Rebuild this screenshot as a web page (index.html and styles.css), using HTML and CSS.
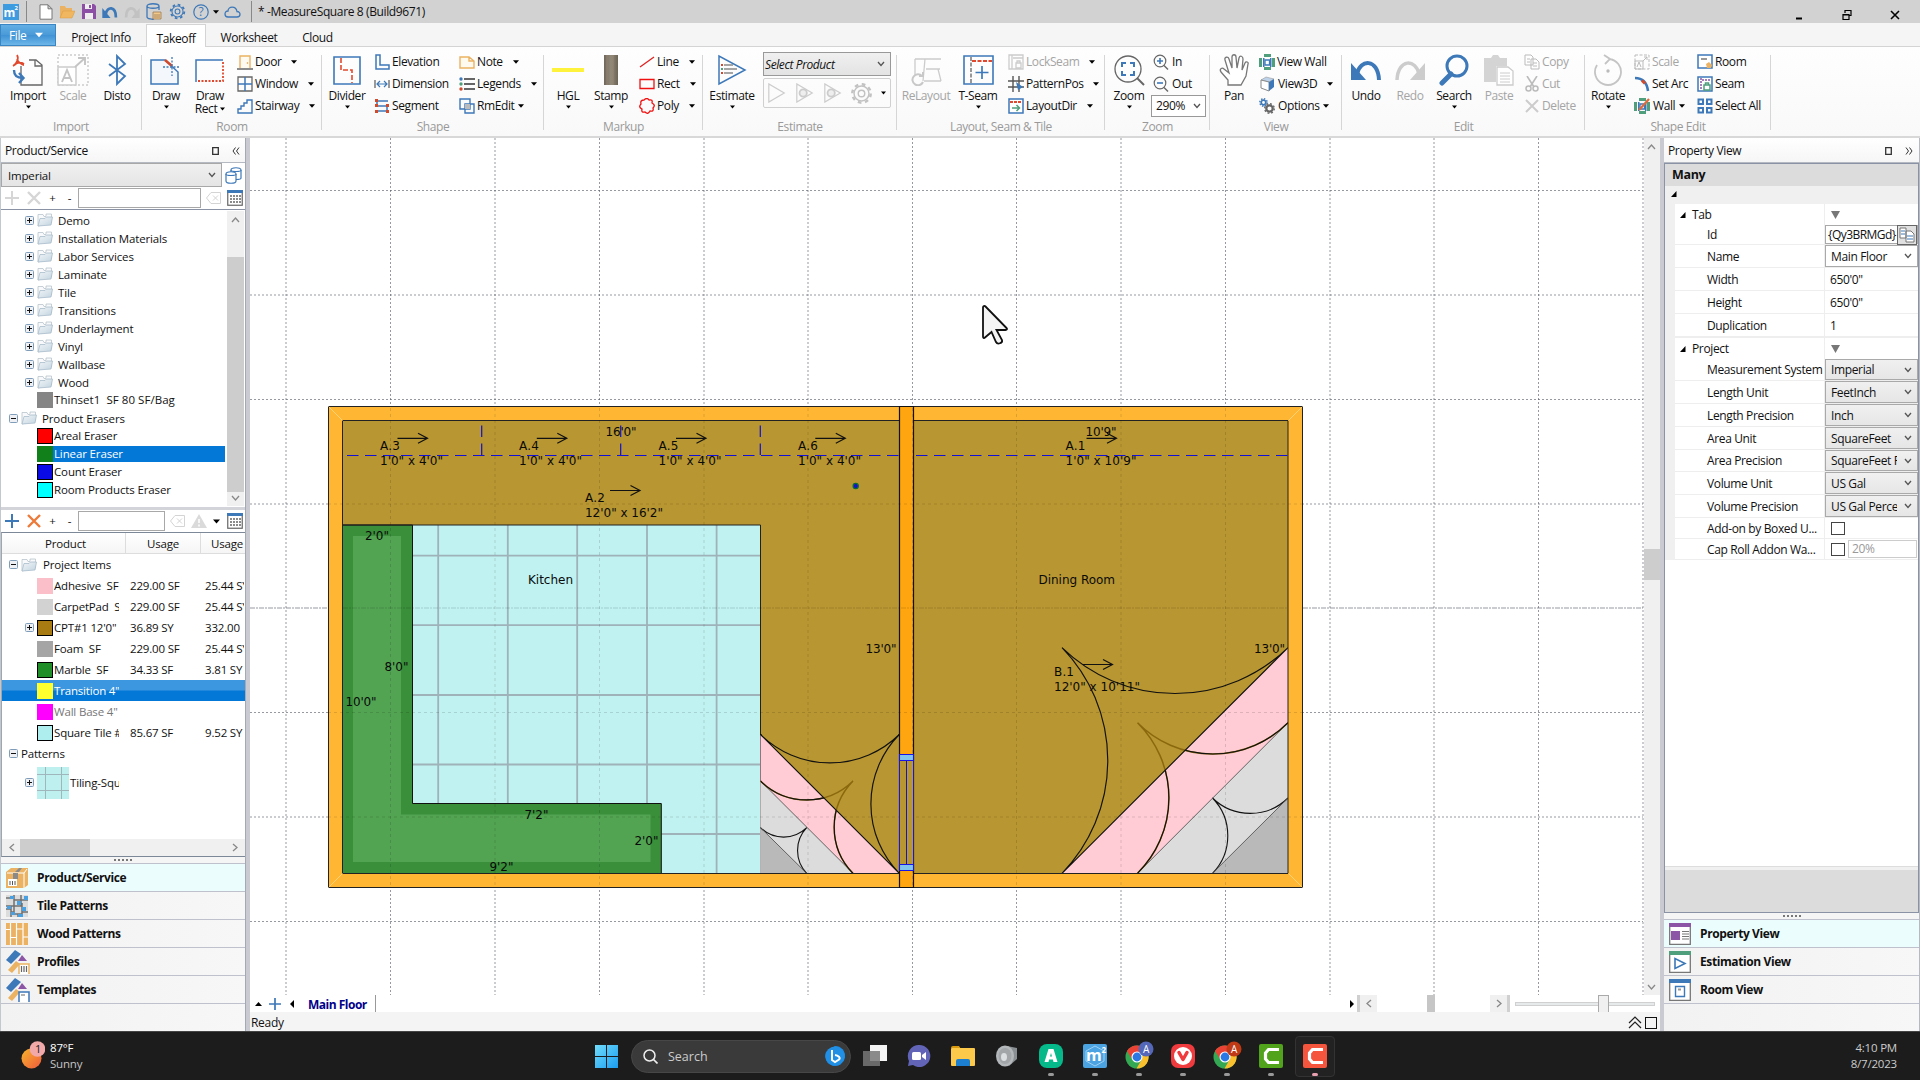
FILE: index.html
```html
<!DOCTYPE html>
<html lang="en">
<head>
<meta charset="utf-8">
<title>MeasureSquare 8</title>
<link rel="stylesheet" href="styles.css">
</head>
<body>
<svg class="defs" width="0" height="0">
  <defs>
    <linearGradient id="gFolder" x1="0" y1="0" x2="1" y2="1"><stop offset="0" stop-color="#f2f6f8"/><stop offset="1" stop-color="#c3d4e0"/></linearGradient>
    <linearGradient id="gWin" x1="0" y1="0" x2="1" y2="1"><stop offset="0" stop-color="#70dcfb"/><stop offset="1" stop-color="#1a9cf0"/></linearGradient>
    <linearGradient id="gSun" x1="0" y1="0" x2="1" y2="1"><stop offset="0" stop-color="#f7b52c"/><stop offset="1" stop-color="#f05a3c"/></linearGradient>
    <linearGradient id="gStamp" x1="0" y1="0" x2="1" y2="0"><stop offset="0" stop-color="#6f675a"/><stop offset=".5" stop-color="#948a7a"/><stop offset="1" stop-color="#6b6355"/></linearGradient>
    <symbol id="arrow" viewBox="0 0 7 4"><path d="M0 0h7L3.500 4z"/></symbol>
    <symbol id="chev" viewBox="0 0 8 6"><path d="M1 1l3 3.500L7 1" fill="none" stroke="#555" stroke-width="1.300"/></symbol>
    <symbol id="plusbox" viewBox="0 0 9 9"><rect x=".5" y=".5" width="8" height="8" rx="1" fill="#eef0f4" stroke="#7f9db9"/><path d="M2 4.500h5M4.500 2v5" stroke="#111"/></symbol>
    <symbol id="minusbox" viewBox="0 0 9 9"><rect x=".5" y=".5" width="8" height="8" rx="1" fill="#eef0f4" stroke="#7f9db9"/><path d="M2 4.500h5" stroke="#111"/></symbol>
    <symbol id="folder" viewBox="0 0 16 16"><path d="M1 14V2.500h5l1 2h2V2h5.500v9z" fill="#f7f9fa" stroke="#b9c4cc" stroke-width=".8"/><path d="M1 14L3 6.500h5L9.500 5h6L14 13z" fill="url(#gFolder)" stroke="#a9bccb" stroke-width=".8"/></symbol>
    <symbol id="plus" viewBox="0 0 14 14"><path d="M7 0v14M0 7h14" stroke="currentColor" stroke-width="2"/></symbol>
    <symbol id="cross" viewBox="0 0 14 14"><path d="M1 1l12 12M13 1L1 13" stroke="currentColor" stroke-width="2.400"/></symbol>
    <symbol id="clear" viewBox="0 0 15 12"><path d="M5 .5h9.500v11H5L.5 6zM7 3.500l5 5M12 3.500l-5 5" fill="none" stroke="#d4d4d4"/></symbol>
    <symbol id="gridic" viewBox="0 0 16 16"><rect x=".75" y=".75" width="14.500" height="14.500" fill="#fff" stroke="#666" stroke-width="1.200"/><path d="M0 1.500h16" stroke="#3d78b8" stroke-width="3"/><path d="M3 6h2m1 0h2m1 0h2m1 0h2M3 9h2m1 0h2m1 0h2m1 0h2M3 12h2m1 0h2m1 0h2m1 0h2" stroke="#666" stroke-width="1.500"/></symbol>
    <symbol id="undo" viewBox="0 0 26 22"><path d="M6 15C8 2 23 1 23 21" fill="none" stroke="currentColor" stroke-width="4.600"/><path d="M0 5v17h14z" fill="currentColor"/></symbol>
    <symbol id="gear" viewBox="0 0 24 24"><g fill="none" stroke="currentColor"><circle cx="12" cy="12" r="9.600" stroke-width="2.600" stroke-dasharray="3.770 3.770"/><circle cx="12" cy="12" r="7.800" stroke-width="1.500"/><circle cx="12" cy="12" r="3.400" stroke-width="1.500"/></g></symbol>
    <symbol id="mag" viewBox="0 0 16 16"><circle cx="7" cy="7" r="5.800" fill="none" stroke="#666" stroke-width="1.200"/><path d="M11 11.500l4 4" stroke="#666" stroke-width="1.400"/></symbol>
    <symbol id="profile" viewBox="0 0 24 24"><path d="M0 10L9 0l6 4L5 14z" fill="#3d78b8"/><path d="M16 5l5 6h-9z" fill="#8c55a5"/><path d="M2 20L10 11l4 3-8 9z" fill="#eab262"/></symbol>
    <symbol id="chrome" viewBox="0 0 24 24"><circle cx="12" cy="12" r="11.500" fill="#34a853"/><path d="M12 .5A11.500 11.500 0 0 1 22.500 7H12l-5 7L2 6A11.500 11.500 0 0 1 12 .5z" fill="#ea4335"/><path d="M22.500 7A11.500 11.500 0 0 1 11.500 23.500L17 14l-3-7z" fill="#fbc02d"/><circle cx="12" cy="12" r="5.500" fill="#fff"/><circle cx="12" cy="12" r="4.400" fill="#2b78e4"/></symbol>
    <symbol id="play" viewBox="0 0 20 22"><path d="M1 1v20l17-10z" fill="none" stroke="#ccc" stroke-width="1.300"/></symbol>
    <symbol id="wallic" viewBox="0 0 16 16"><path d="M5 0h7v3H5zM5 13h7v3H5zM0 4h3v9H0zM13 4h3v9h-3z" fill="#4f9f7c"/><path d="M4 4h1.500v9H4zM11 4h1.500v9H11z" fill="#3d78b8"/><path d="M6 6h4.500v5H6z" fill="#fff" stroke="#3d78b8" stroke-width="1.300"/></symbol>
  </defs>
</svg>

<header class="titlebar">
  <svg class="logo" width="16" height="16" viewBox="0 0 16 16"><rect width="16" height="16" fill="#3d9be0"/><text x="0.500" y="13" class="logo-m">m</text><text x="11.500" y="6" class="logo-2">2</text></svg>
  <i class="tsep"></i>
  <div class="quick">
    <svg width="14" height="16" viewBox="0 0 14 16"><path d="M1 .8h8l4 4v10.400H1zM9 .8v4h4" fill="#fff" stroke="#777"/></svg>
    <svg width="16" height="14" viewBox="0 0 16 14"><path d="M1 13V1h5l1 2h6v3" fill="#eab262"/><path d="M1 13L4 6h12l-3 7z" fill="#f0b660" stroke="#d99a3c" stroke-width=".5"/></svg>
    <svg width="14" height="15" viewBox="0 0 14 15"><path d="M0 0h12l2 2v13H0z" fill="#8c4fa5"/><path d="M3 0h7v5H3zM3 9h8v6H3z" fill="#eee"/><path d="M7 1h2v3H7z" fill="#8c4fa5"/></svg>
    <svg class="blue" width="16" height="13"><use href="#undo"/></svg>
    <svg class="lt flip" width="16" height="13"><use href="#undo"/></svg>
    <svg width="16" height="17" viewBox="0 0 16 17"><path d="M1 3v11c0 2 6 2.500 7 2M13 3v4M1 3c0-3 12-3 12 0S1 6 1 3z" fill="none" stroke="#3d78b8" stroke-width="1.300"/><path d="M7 9h8v7H7zM9 11v4m2-4v4m2-4v4" fill="#f3c98b" stroke="#9b7b55" stroke-width=".8"/></svg>
    <svg class="blue" width="17" height="17"><use href="#gear"/></svg>
    <svg class="help" width="16" height="16" viewBox="0 0 16 16"><circle cx="8" cy="8" r="7.200" fill="none" stroke="#3d78b8" stroke-width="1.200"/><text x="8" y="12" text-anchor="middle" class="qm">?</text></svg>
    <svg class="qarr" width="6" height="4"><use href="#arrow"/></svg>
    <svg width="17" height="12" viewBox="0 0 17 12"><path d="M4 11h9c4 0 4-5.500 0-5.500C12-.5 4 0 4 5 0 5 0 11 4 11z" fill="none" stroke="#3d78b8" stroke-width="1.300"/></svg>
  </div>
  <i class="tsep"></i>
  <span class="title">* -MeasureSquare 8 (Build9671)</span>
  <div class="winbtns">
    <svg width="10" height="12" viewBox="0 0 10 12"><path d="M2 9.500h6" stroke="#000" stroke-width="2"/></svg>
    <svg width="10" height="12" viewBox="0 0 10 12"><path d="M3 4V1.500h6v5H7M1 5.500h6v5H1zM1 6h6" fill="none" stroke="#000" stroke-width="1.200"/></svg>
    <svg width="10" height="10" viewBox="0 0 10 10"><path d="M1 1l8 8M9 1L1 9" stroke="#000" stroke-width="1.600"/></svg>
  </div>
</header>

<nav class="tabs">
  <div class="file">File <svg width="8" height="6"><use href="#arrow"/></svg></div>
  <div class="tab t1">Project Info</div>
  <div class="tab t2 active">Takeoff</div>
  <div class="tab t3">Worksheet</div>
  <div class="tab t4">Cloud</div>
</nav>

<section class="ribbon">
  <div class="group g-import">
    <div class="tools">
      <div class="big"><svg width="32" height="32" viewBox="0 0 32 32"><path d="M9 12v19h21V11l-6-5H17M23 6v6h7" fill="none" stroke="#666" stroke-width="1.300"/><path d="M1 12C5 10 7 4 5 1M5 5c1 3 5 6 7 6M2 11c4-3 7-3 10-1" fill="none" stroke="#e0492e" stroke-width="1.800"/><path d="M2 16c0 6 3 8 9 8M7 19l4.500 5L7 29" fill="none" stroke="#3d78b8" stroke-width="2.400"/></svg><span>Import</span><svg class="arr" width="5" height="4"><use href="#arrow"/></svg></div>
      <div class="big off"><svg width="32" height="32" viewBox="0 0 32 32"><rect x="1" y="1" width="30" height="30" fill="none" stroke="#ccc" stroke-dasharray="2 2" stroke-width="1.500"/><path d="M1 13h18v18H1z" fill="#fff" stroke="#ccc" stroke-width="1.500"/><path d="M5 28l5-12 5 12M7 24h6M18 13L28 4M21 4h7v7" fill="none" stroke="#c4c4c4" stroke-width="1.900"/></svg><span>Scale</span></div>
      <div class="big"><svg width="32" height="32" viewBox="0 0 32 32"><path d="M8 10l16 12-8 8V2l8 8L8 22" fill="none" stroke="#3d78b8" stroke-width="1.800"/></svg><span>Disto</span></div>
    </div>
    <div class="gname">Import</div>
  </div>
  <div class="group g-room">
    <div class="tools">
      <div class="big"><svg width="32" height="32" viewBox="0 0 32 32"><path d="M1 6h14l13 12v12H1z" fill="#f4f8fc" stroke="#3d78b8" stroke-width="1.500"/><path d="M15 6l7 6" stroke="#d24a2c" stroke-width="2.500"/><path d="M22 3v19M13 13h17" stroke="#3d78b8" stroke-dasharray="2 1.500" stroke-width="1.300"/></svg><span>Draw</span><svg class="arr" width="5" height="4"><use href="#arrow"/></svg></div>
      <div class="big"><svg width="32" height="32" viewBox="0 0 32 32"><path d="M2 28V6h27" fill="none" stroke="#3d78b8" stroke-width="1.500"/><path d="M29 8v19H3" fill="none" stroke="#e0492e" stroke-width="1.800" stroke-dasharray="2 1.500"/></svg><span>Draw</span><span class="second">Rect <svg width="5" height="4"><use href="#arrow"/></svg></span></div>
      <div class="col">
        <div class="small"><svg width="16" height="16" viewBox="0 0 16 16"><path d="M3 14V2h10v12" fill="#fffaf2" stroke="#eab262" stroke-width="1.400"/><path d="M0 15h16" stroke="#666" stroke-width="1.500"/><circle cx="10.500" cy="9" r=".8" fill="#d99a3c"/></svg>Door<svg class="sarr" width="6" height="4"><use href="#arrow"/></svg></div>
        <div class="small"><svg width="16" height="16" viewBox="0 0 16 16"><path d="M1 1h14v14H1z" fill="none" stroke="#666" stroke-width="1.300"/><path d="M8 1v14M1 8h14" stroke="#3d78b8" stroke-width="1.500"/></svg>Window<svg class="sarr" width="6" height="4"><use href="#arrow"/></svg></div>
        <div class="small"><svg width="16" height="16" viewBox="0 0 16 16"><path d="M1 15v-4h3V8h3V5h3V2h5v13z" fill="none" stroke="#3d78b8" stroke-width="1.400"/></svg>Stairway<svg class="sarr" width="6" height="4"><use href="#arrow"/></svg></div>
      </div>
    </div>
    <div class="gname">Room</div>
  </div>
  <div class="group g-shape">
    <div class="tools">
      <div class="big"><svg width="32" height="32" viewBox="0 0 32 32"><path d="M3 3h26v27H3z" fill="none" stroke="#3d78b8" stroke-width="1.600"/><path d="M10 4v12h11v13" fill="none" stroke="#e0492e" stroke-width="1.600" stroke-dasharray="5 2"/></svg><span>Divider</span><svg class="arr" width="5" height="4"><use href="#arrow"/></svg></div>
      <div class="col">
        <div class="small"><svg width="16" height="16" viewBox="0 0 16 16"><path d="M2 1h4v10h9v4H2z" fill="none" stroke="#3d78b8" stroke-width="1.500"/></svg>Elevation</div>
        <div class="small"><svg width="16" height="16" viewBox="0 0 16 16"><path d="M1 4v8M15 4v8" stroke="#666" stroke-width="1.300"/><path d="M3 8h10M6 5L3 8l3 3M10 5l3 3-3 3" fill="none" stroke="#3d78b8" stroke-width="1.200"/></svg>Dimension</div>
        <div class="small"><svg width="16" height="16" viewBox="0 0 16 16"><path d="M14 3H3v5h10v5H2" fill="none" stroke="#3d78b8" stroke-width="1.500"/><path d="M1 1h3v3H1zM1 6h3v3H1zM12 6h3v3h-3zM1 12h3v3H1zM12 12h3v3h-3z" fill="#d24a2c"/></svg>Segment</div>
      </div>
      <div class="col">
        <div class="small"><svg width="16" height="16" viewBox="0 0 16 16"><path d="M1 3h9l5 4v7H1zM10 3v4h5" fill="#fffaf0" stroke="#eab262" stroke-width="1.400"/></svg>Note<svg class="sarr" width="6" height="4"><use href="#arrow"/></svg></div>
        <div class="small"><svg width="16" height="16" viewBox="0 0 16 16"><path d="M5 3h11M5 8h11M5 13h11" stroke="#666" stroke-width="2"/><circle cx="2" cy="3" r="1.700" fill="#3d78b8"/><circle cx="2" cy="8" r="1.700" fill="#4f9f7c"/><circle cx="2" cy="13" r="1.700" fill="#d24a2c"/></svg>Legends<svg class="sarr" width="6" height="4"><use href="#arrow"/></svg></div>
        <div class="small"><svg width="16" height="16" viewBox="0 0 16 16"><path d="M1 1h10v10H1zM6 6h9v9H6z" fill="none" stroke="#3d78b8" stroke-width="1.400"/><path d="M6 6h5v5H6z" fill="#bbb"/></svg>RmEdit<svg class="sarr near" width="6" height="4"><use href="#arrow"/></svg></div>
      </div>
    </div>
    <div class="gname">Shape</div>
  </div>
  <div class="group g-markup">
    <div class="tools">
      <div class="big"><svg width="32" height="32" viewBox="0 0 32 32"><path d="M0 16h32" stroke="#fff23c" stroke-width="4"/></svg><span>HGL</span><svg class="arr" width="5" height="4"><use href="#arrow"/></svg></div>
      <div class="big"><svg width="32" height="32" viewBox="0 0 32 32"><rect x="9" y="1" width="14" height="30" fill="url(#gStamp)"/><path d="M12 1v30M18 1v30" stroke="#a2937d" stroke-width=".5"/></svg><span>Stamp</span><svg class="arr" width="5" height="4"><use href="#arrow"/></svg></div>
      <div class="col">
        <div class="small"><svg width="16" height="16" viewBox="0 0 16 16"><path d="M1 13L15 3" stroke="#e02020" stroke-width="1.300"/></svg>Line<svg class="sarr" width="6" height="4"><use href="#arrow"/></svg></div>
        <div class="small"><svg width="16" height="16" viewBox="0 0 16 16"><path d="M1 3.500h14v9H1z" fill="none" stroke="#f01010" stroke-width="1.300"/></svg>Rect<svg class="sarr" width="6" height="4"><use href="#arrow"/></svg></div>
        <div class="small"><svg width="16" height="16" viewBox="0 0 16 16"><path d="M5 2q3-3 5 0 4-1 3 3 4 2 1 5 1 4-3 3-2 4-5 1-4 1-3-3-4-2-1-5-1-4 3-4z" fill="none" stroke="#f01010" stroke-width="1.300"/></svg>Poly<svg class="sarr" width="6" height="4"><use href="#arrow"/></svg></div>
      </div>
    </div>
    <div class="gname">Markup</div>
  </div>
  <div class="group g-estimate">
    <div class="tools">
      <div class="big"><svg width="32" height="32" viewBox="0 0 32 32"><path d="M3 2v28l26-14z" fill="none" stroke="#3d78b8" stroke-width="1.500"/><path d="M8 11h9M8 15h13M8 19h9" stroke="#888" stroke-width="1.300"/><path d="M5 11h2M5 19h2" stroke="#d24a2c" stroke-width="2"/><path d="M5 15h2" stroke="#4f9f7c" stroke-width="2"/></svg><span>Estimate</span><svg class="arr" width="5" height="4"><use href="#arrow"/></svg></div>
      <div class="estbox">
        <div class="selprod"><em>Select Product</em><svg width="8" height="6"><use href="#chev"/></svg></div>
        <div class="playbar">
          <svg width="20" height="20"><use href="#play"/></svg>
          <svg width="20" height="20" viewBox="0 0 20 22"><use href="#play"/><circle cx="8" cy="11" r="4" fill="#eee" stroke="#ccc" stroke-width="2"/></svg>
          <svg width="20" height="20" viewBox="0 0 20 22"><use href="#play"/><circle cx="8" cy="11" r="4" fill="#eee" stroke="#ccc" stroke-width="2"/></svg>
          <svg class="lt" width="23" height="23"><use href="#gear"/></svg>
          <svg width="5" height="4"><use href="#arrow"/></svg>
        </div>
      </div>
    </div>
    <div class="gname">Estimate</div>
  </div>
  <div class="group g-layout">
    <div class="tools">
      <div class="big off"><svg width="32" height="32" viewBox="0 0 32 32"><path d="M5 5h26M5 5v16M15 5l-2 22M16 15h14M28 15l3 12M14 27h17" fill="none" stroke="#ccc" stroke-width="1.300"/><path d="M12 22a5.500 5.500 0 1 0 1 6M9 22h4v-4" fill="none" stroke="#c8c8c8" stroke-width="2"/></svg><span>ReLayout</span></div>
      <div class="big"><svg width="32" height="32" viewBox="0 0 32 32"><path d="M2 2h29v28H2z" fill="none" stroke="#3d78b8" stroke-width="1.600"/><path d="M9 3v27" stroke="#777" stroke-dasharray="4 1.500" stroke-width="1.500"/><path d="M10 7h20" stroke="#e0492e" stroke-dasharray="4 1.500" stroke-width="2"/><path d="M20 12v13M13.500 18.500h13" stroke="#3d78b8" stroke-width="1.700"/></svg><span>T-Seam</span><svg class="arr" width="5" height="4"><use href="#arrow"/></svg></div>
      <div class="col">
        <div class="small off"><svg width="16" height="16" viewBox="0 0 16 16"><path d="M1 1h14v14H1zM4 1v14M5 4h10M8 9h5v5H8zM9 9V7h3v2" fill="none" stroke="#ccc" stroke-width="1.300"/></svg>LockSeam<svg class="sarr" width="6" height="4"><use href="#arrow"/></svg></div>
        <div class="small"><svg width="16" height="16" viewBox="0 0 16 16"><path d="M5 0v16M11 0v16M0 5h16M0 11h16" stroke="#555" stroke-width="1.400"/><path d="M8 6l7 5-5 3z" fill="#3d78b8"/></svg>PatternPos<svg class="sarr mid" width="6" height="4"><use href="#arrow"/></svg></div>
        <div class="small"><svg width="16" height="16" viewBox="0 0 16 16"><path d="M1 1h14v14H1z" fill="#fff" stroke="#3d78b8" stroke-width="1.500"/><path d="M2 4h12" stroke="#e0492e" stroke-width="2" stroke-dasharray="3 1"/><path d="M4 10h7M8.500 7l3 3-3 3" fill="none" stroke="#4f9f7c" stroke-width="1.500"/></svg>LayoutDir<svg class="sarr" width="6" height="4"><use href="#arrow"/></svg></div>
      </div>
    </div>
    <div class="gname">Layout, Seam &amp; Tile</div>
  </div>
  <div class="group g-zoom">
    <div class="tools">
      <div class="big"><svg width="32" height="32" viewBox="0 0 32 32"><circle cx="15" cy="15" r="13" fill="none" stroke="#666" stroke-width="1.300"/><path d="M24 24l7 7" stroke="#666" stroke-width="2"/><path d="M9 13V9h4M17 9h4v4M21 17v4h-4M13 21H9v-4" fill="none" stroke="#3d78b8" stroke-width="2"/></svg><span>Zoom</span><svg class="arr" width="5" height="4"><use href="#arrow"/></svg></div>
      <div class="col">
        <div class="small sp"><svg width="16" height="16" viewBox="0 0 16 16"><use href="#mag"/><path d="M4 7h6M7 4v6" stroke="#3d78b8" stroke-width="1.600"/></svg>In</div>
        <div class="small sp"><svg width="16" height="16" viewBox="0 0 16 16"><use href="#mag"/><path d="M4 7h6" stroke="#3d78b8" stroke-width="1.600"/></svg>Out</div>
        <div class="zcombo">290%<svg width="8" height="6"><use href="#chev"/></svg></div>
      </div>
    </div>
    <div class="gname">Zoom</div>
  </div>
  <div class="group g-view">
    <div class="tools">
      <div class="big"><svg width="32" height="32" viewBox="0 0 32 32"><path d="M10 31v-5L3 18c-2-3 1-5 3-3l5 4L7 6c-1-3 3-4 4-1l3 9L14 3c0-3 4-3 4 0l1 11 2-10c1-3 4-2 4 1l-1 11 3-7c1-2 4-1 3 1l-2 12-5 9H11z" fill="#fff" stroke="#777" stroke-width="1.300"/></svg><span>Pan</span></div>
      <div class="col">
        <div class="small"><svg width="16" height="16"><use href="#wallic"/></svg>View Wall</div>
        <div class="small sp"><svg width="16" height="16" viewBox="0 0 16 16"><path d="M2 4l5-3 8 2-5 3z" fill="#bcd3ea" stroke="#999" stroke-width=".6"/><path d="M2 4l8 2v9l-8-3z" fill="#fff" stroke="#888"/><path d="M10 6l5-3v8l-5 4z" fill="#3d78b8"/></svg>View3D<svg class="sarr" width="6" height="4"><use href="#arrow"/></svg></div>
        <div class="small sp"><svg width="16" height="16" viewBox="0 0 16 16"><circle cx="4.500" cy="4.500" r="2.300" fill="none" stroke="#3d78b8" stroke-width="1.700"/><circle cx="4.500" cy="4.500" r="3.700" fill="none" stroke="#3d78b8" stroke-dasharray="1.450 1.450" stroke-width="1.400"/><circle cx="10.500" cy="10.500" r="3.200" fill="none" stroke="#666" stroke-width="2.300"/><circle cx="10.500" cy="10.500" r="4.800" fill="none" stroke="#666" stroke-dasharray="1.880 1.880" stroke-width="1.400"/></svg>Options<svg class="sarr near" width="6" height="4"><use href="#arrow"/></svg></div>
      </div>
    </div>
    <div class="gname">View</div>
  </div>
  <div class="group g-edit">
    <div class="tools">
      <div class="big"><svg width="32" height="32" viewBox="0 0 32 32"><path d="M7 20C10 5 28 4 29 26" fill="none" stroke="#3d78b8" stroke-width="4"/><path d="M1 9v17h15z" fill="#3d78b8"/></svg><span>Undo</span></div>
      <div class="big off"><svg class="flip" width="32" height="32" viewBox="0 0 32 32"><path d="M7 20C10 5 28 4 29 26" fill="none" stroke="#ccc" stroke-width="3.500"/><path d="M1 9v17h15z" fill="#ccc"/></svg><span>Redo</span></div>
      <div class="big"><svg width="32" height="32" viewBox="0 0 32 32"><circle cx="19" cy="12" r="10" fill="none" stroke="#3d78b8" stroke-width="3"/><path d="M13 20L4 29" stroke="#3d78b8" stroke-width="5" stroke-linecap="round"/></svg><span>Search</span><svg class="arr" width="5" height="4"><use href="#arrow"/></svg></div>
      <div class="big off"><svg width="32" height="32" viewBox="0 0 32 32"><path d="M1 4h7l2-3h5l2 3h7v8H13v16H1z" fill="#d4d4d4"/><path d="M14 13h11l5 4v14H14z" fill="#fff" stroke="#ccc" stroke-width="1.300"/><path d="M17 19h10M17 22h10M17 25h10M17 28h10" stroke="#ccc"/></svg><span>Paste</span></div>
      <div class="col">
        <div class="small off"><svg width="16" height="16" viewBox="0 0 16 16"><path d="M1 1h6l2 2v8H1zM7 5h5l3 3v7H7z" fill="#fff" stroke="#bbb"/><path d="M3 5h3M3 8h3M9 9h4M9 12h4" stroke="#bbb"/></svg>Copy</div>
        <div class="small off"><svg width="16" height="16" viewBox="0 0 16 16"><path d="M3 0l7 11M13 0L6 11" stroke="#bbb" stroke-width="1.600"/><circle cx="4.500" cy="12.500" r="2.500" fill="none" stroke="#bbb" stroke-width="1.500"/><circle cx="11.500" cy="12.500" r="2.500" fill="none" stroke="#bbb" stroke-width="1.500"/></svg>Cut</div>
        <div class="small off"><svg width="16" height="16" viewBox="0 0 16 16"><path d="M2 2l12 12M14 2L2 14" stroke="#ccc" stroke-width="2"/></svg>Delete</div>
      </div>
    </div>
    <div class="gname">Edit</div>
  </div>
  <div class="group g-sedit">
    <div class="tools">
      <div class="big"><svg width="32" height="32" viewBox="0 0 32 32"><path d="M17 5a13 13 0 1 1-12 6M12 1l6 4-5 5" fill="none" stroke="#c4c4c4" stroke-width="1.800"/><circle cx="16" cy="17" r="1.700" fill="#bbb"/></svg><span>Rotate</span><svg class="arr" width="5" height="4"><use href="#arrow"/></svg></div>
      <div class="col">
        <div class="small off"><svg width="16" height="16" viewBox="0 0 16 16"><path d="M1 1h14v14H1z" fill="none" stroke="#bbb" stroke-dasharray="3 1.500"/><path d="M1 7h8v8H1zM3 13l2-5 2 5M9 7l4-4M10 3h3v3" fill="none" stroke="#bbb"/></svg>Scale</div>
        <div class="small"><svg width="16" height="16" viewBox="0 0 16 16"><path d="M1 2c8 0 12 5 13 13" fill="none" stroke="#3d78b8" stroke-width="2.500"/><path d="M8 4.500l3 3" stroke="#d24a2c" stroke-width="3"/></svg>Set Arc</div>
        <div class="small sp"><svg width="16" height="16" viewBox="0 0 16 16"><use href="#wallic"/><path d="M5 12L15 1" stroke="#e06a3c" stroke-width="2.200"/></svg>Wall<svg class="sarr near" width="6" height="4"><use href="#arrow"/></svg></div>
      </div>
      <div class="col">
        <div class="small"><svg width="16" height="16" viewBox="0 0 16 16"><path d="M1 1h14v13H1z" fill="#fff" stroke="#3d78b8" stroke-width="1.500"/><path d="M4 4h6v2H4z" fill="#999"/><path d="M9 10l3-2 3 3-1 3h-4z" fill="#eab262"/></svg>Room</div>
        <div class="small"><svg width="16" height="16" viewBox="0 0 16 16"><path d="M1 1h14v14H1z" fill="#fff" stroke="#3d78b8" stroke-width="1.500"/><path d="M4 2v12M5 4h9" stroke="#8c55a5" stroke-dasharray="2 1" stroke-width="1.500"/><path d="M7 9h6v5H7zM8.500 9V7h3v2" fill="none" stroke="#4f9f7c" stroke-width="1.500"/></svg>Seam</div>
        <div class="small"><svg width="16" height="16" viewBox="0 0 16 16"><path d="M1.500 1.500h4.500v4.500H1.500zM10 1.500h4.500v4.500H10zM1.500 10h4.500v4.500H1.500zM10 10h4.500v4.500H10z" fill="none" stroke="#3d78b8" stroke-width="2"/></svg>Select All</div>
      </div>
    </div>
    <div class="gname">Shape Edit</div>
  </div>
</section>

<main class="work">
  <aside class="left">
    <div class="phead"><span>Product/Service</span><svg width="7" height="8" viewBox="0 0 7 8"><path d="M.7.7h5.600v6.600H.7z" fill="none" stroke="#333" stroke-width="1.300"/></svg><svg width="8" height="8" viewBox="0 0 8 8"><path d="M3.500.5L1 4l2.500 3.500M7 .5L4.500 4 7 7.500" fill="none" stroke="#333"/></svg></div>
    <div class="lcombo"><div class="combo wide">Imperial<svg width="8" height="6"><use href="#chev"/></svg></div><svg class="dbs" width="17" height="17" viewBox="0 0 17 17"><g fill="#fff" stroke="#3d78b8" stroke-width="1.200"><path d="M6 3v8c0 2 10 2 10 0V3c0-3-10-3-10 0z"/><path d="M6 3c0 2 10 2 10 0" /><path d="M1 7v7c0 3 10 3 10 0V7c0-3-10-3-10 0z"/><path d="M1 7c0 2 10 2 10 0"/></g></svg></div>
    <div class="ptool top">
      <svg class="vlt" width="14" height="14"><use href="#plus"/></svg><svg class="vlt" width="14" height="14"><use href="#cross"/></svg><span>+</span><span>-</span><div class="box b1"></div><svg class="clr" width="15" height="12"><use href="#clear"/></svg><svg class="gr" width="16" height="16"><use href="#gridic"/></svg>
    </div>
    <div class="treewrap">
      <div class="tree">
        <div class="tr l2"><svg class="pb"><use href="#plusbox"/></svg><svg class="fo"><use href="#folder"/></svg><span>Demo</span></div>
        <div class="tr l2"><svg class="pb"><use href="#plusbox"/></svg><svg class="fo"><use href="#folder"/></svg><span>Installation Materials</span></div>
        <div class="tr l2"><svg class="pb"><use href="#plusbox"/></svg><svg class="fo"><use href="#folder"/></svg><span>Labor Services</span></div>
        <div class="tr l2"><svg class="pb"><use href="#plusbox"/></svg><svg class="fo"><use href="#folder"/></svg><span>Laminate</span></div>
        <div class="tr l2"><svg class="pb"><use href="#plusbox"/></svg><svg class="fo"><use href="#folder"/></svg><span>Tile</span></div>
        <div class="tr l2"><svg class="pb"><use href="#plusbox"/></svg><svg class="fo"><use href="#folder"/></svg><span>Transitions</span></div>
        <div class="tr l2"><svg class="pb"><use href="#plusbox"/></svg><svg class="fo"><use href="#folder"/></svg><span>Underlayment</span></div>
        <div class="tr l2"><svg class="pb"><use href="#plusbox"/></svg><svg class="fo"><use href="#folder"/></svg><span>Vinyl</span></div>
        <div class="tr l2"><svg class="pb"><use href="#plusbox"/></svg><svg class="fo"><use href="#folder"/></svg><span>Wallbase</span></div>
        <div class="tr l2"><svg class="pb"><use href="#plusbox"/></svg><svg class="fo"><use href="#folder"/></svg><span>Wood</span></div>
        <div class="tr l3 wide-t"><i class="sw gray nb"></i><span>Thinset1&nbsp; SF 80 SF/Bag</span></div>
        <div class="tr l1"><svg class="pb"><use href="#minusbox"/></svg><svg class="fo"><use href="#folder"/></svg><span>Product Erasers</span></div>
        <div class="tr l3"><i class="sw red"></i><span>Areal Eraser</span></div>
        <div class="tr l3 on"><i class="sw green nb"></i><span>Linear Eraser</span></div>
        <div class="tr l3"><i class="sw bl"></i><span>Count Eraser</span></div>
        <div class="tr l3"><i class="sw cyan"></i><span>Room Products Eraser</span></div>
      </div>
      <div class="vscroll"><svg width="9" height="6" viewBox="0 0 9 6"><path d="M1 5l3.500-4L8 5" fill="none" stroke="#888" stroke-width="1.300"/></svg><i></i><svg width="9" height="6" viewBox="0 0 9 6"><path d="M1 1l3.500 4L8 1" fill="none" stroke="#888" stroke-width="1.300"/></svg></div>
    </div>
    <div class="ptool second-tool">
      <svg class="blue" width="14" height="14"><use href="#plus"/></svg><svg class="orange" width="14" height="14"><use href="#cross"/></svg><span>+</span><span>-</span><div class="box b2"></div><svg class="clr" width="15" height="12"><use href="#clear"/></svg><svg class="warn" width="16" height="14" viewBox="0 0 16 14"><path d="M8 0l8 14H0z" fill="#dadada"/><path d="M8 5v4M8 10.500v2" stroke="#fff" stroke-width="1.500"/></svg><svg class="wa" width="7" height="5"><use href="#arrow"/></svg><svg class="gr" width="16" height="16"><use href="#gridic"/></svg>
    </div>
    <div class="table">
      <div class="thead"><span>Product</span><span>Usage</span><span>Usage</span></div>
      <div class="pr l1"><svg class="pb"><use href="#minusbox"/></svg><svg class="fo"><use href="#folder"/></svg><span class="nm">Project Items</span></div>
      <div class="pr l3"><i class="sw pink nb"></i><span class="nm">Adhesive&nbsp; SF</span><span class="u1">229.00 SF</span><span class="u2">25.44 SY</span></div>
      <div class="pr l3"><i class="sw lgray nb"></i><span class="nm">CarpetPad&nbsp; SF</span><span class="u1">229.00 SF</span><span class="u2">25.44 SY</span></div>
      <div class="pr l2"><svg class="pb"><use href="#plusbox"/></svg><i class="sw brown"></i><span class="nm">CPT#1 12'0"</span><span class="u1">36.89 SY</span><span class="u2">332.00</span></div>
      <div class="pr l3"><i class="sw mgray nb"></i><span class="nm">Foam&nbsp; SF</span><span class="u1">229.00 SF</span><span class="u2">25.44 SY</span></div>
      <div class="pr l3"><i class="sw marble"></i><span class="nm">Marble&nbsp; SF</span><span class="u1">34.33 SF</span><span class="u2">3.81 SY</span></div>
      <div class="pr l3 on"><i class="sw yellow nb"></i><span class="nm">Transition 4"</span></div>
      <div class="pr l3 dim"><i class="sw magenta nb"></i><span class="nm">Wall Base 4"</span></div>
      <div class="pr l3"><i class="sw aqua"></i><span class="nm">Square Tile #1</span><span class="u1">85.67 SF</span><span class="u2">9.52 SY</span></div>
      <div class="pr l1"><svg class="pb"><use href="#minusbox"/></svg><span class="pat">Patterns</span></div>
      <div class="pr l2 tall"><svg class="pb"><use href="#plusbox"/></svg><svg class="tilesw" width="32" height="32" viewBox="0 0 32 32"><rect width="32" height="32" fill="#bff0f0"/><path d="M8.500 0v32M24.500 0v32M0 7.500h32M0 23.500h32" stroke="#9fb6bc"/></svg><span class="nm">Tiling-Square</span></div>
      <div class="hscroll"><svg width="6" height="9" viewBox="0 0 6 9"><path d="M5 1L1 4.500 5 8" fill="none" stroke="#888" stroke-width="1.300"/></svg><i></i><svg width="6" height="9" viewBox="0 0 6 9"><path d="M1 1l4 3.500L1 8" fill="none" stroke="#888" stroke-width="1.300"/></svg></div>
    </div>
    <div class="dots"><i></i><i></i><i></i><i></i><i></i></div>
    <div class="acc">
      <div class="ac on"><svg width="22" height="22" viewBox="0 0 22 22"><path d="M0 5l5-4h17v17l-4 3H0z" fill="#eab262"/><path d="M1 6h17v15M18 6l3-4" fill="none" stroke="#fff" stroke-width="1"/><path d="M7 6h5v6H7zM13 1h3l-3 4h-4z" fill="#8a8a8a"/><path d="M2 12h9v7H2z" fill="#fff"/><path d="M4 14v4M6.500 14v4M9 14v4" stroke="#555"/></svg>Product/Service</div>
      <div class="ac"><svg width="22" height="22" viewBox="0 0 22 22"><rect width="22" height="22" fill="#dcdcdc"/><path d="M0 3h8v8H0M8 0v5h7V0M15 5h7M8 11h8v8H8zM16 8v9h6M15 5v6M0 14h5v8M5 11v6h3M12 19v3" fill="none" stroke="#707070" stroke-width="1.500"/><path d="M4 1h4v3H4zM11 6h4v4h-4zM1 11h4v3H1zM18 1h4v4h-4zM5 17h4v3H5zM16 12h4v4h-4zM12 19h5v3h-5z" fill="#48a0e0"/></svg>Tile Patterns</div>
      <div class="ac"><svg width="22" height="22" viewBox="0 0 22 22"><rect width="22" height="22" fill="#eab262"/><path d="M4.500 0v22M10.500 0v22M17 0v22M0 6.500h4M5 14.500h5M11 6h6M17 14h5" stroke="#fff" stroke-width="1.200"/></svg>Wood Patterns</div>
      <div class="ac"><svg width="24" height="24" viewBox="0 0 24 24"><use href="#profile"/><path d="M13 24V14h10v10" fill="#fff" stroke="#eab262" stroke-width="1.500"/><path d="M15.500 16v6M18 16v6M20.500 16v6" stroke="#666" stroke-width="1.200"/></svg>Profiles</div>
      <div class="ac"><svg width="24" height="24" viewBox="0 0 24 24"><use href="#profile"/><path d="M13 24V14h10v10" fill="#fff" stroke="#3d78b8" stroke-width="1.500"/><path d="M15 17h4" stroke="#999" stroke-width="1.500"/></svg>Templates</div>
      <div class="ac rest"></div>
    </div>
  </aside>

  <section class="center">
    <div class="drawing">
      <svg class="plan" width="1394" height="857" viewBox="250 138 1394 857">
        <rect x="250" y="138" width="1394" height="857" fill="#fff"/>
        <g stroke="#555a66" stroke-opacity=".62" stroke-dasharray="2 2" fill="none">
          <path id="gl" d="M250 190.500H1643M250 295H1643M250 399.500H1643M250 504H1643M250 712.500H1643M250 817H1643M250 921.500H1643M286 138V995M390.500 138V995M495 138V995M599.500 138V995M704 138V995M808 138V995M912.500 138V995M1016.500 138V995M1121 138V995M1225.500 138V995M1330 138V995M1434 138V995M1538.500 138V995M1643 138V995"/>
          <path d="M250 608H1643" stroke-dasharray="5 1 2 1" />
        </g>
        <!-- carpeted floor -->
        <path d="M342.500 420.500H1288V873.500H342.500z" fill="#b89631"/>
        <!-- tile area -->
        <path d="M412 525H760.500V873.500H412z" fill="#bff2f1"/>
        <path d="M438.200 525V873M507.800 525V803M577.200 525V803M647 525V803M716.600 525V873M412 555.700H760M412 625.200H760M412 695H760M412 764.500H760M661 834H760" stroke="#9fb2ba" stroke-width="1.800"/>
        <!-- marble counter -->
        <path d="M342.500 525H412.500V803.500H661.300V873.500H342.500z" fill="#3a8f3a" stroke="#111"/>
        <path d="M353 536H401V814.500H650.500V862H353z" fill="#52a452"/>
        <path d="M342.500 525H760.500V873" fill="none" stroke="#222"/>
        <!-- folded layers, kitchen -->
        <path d="M760.500 734.500L899.300 873.300H760.500z" fill="#ffccd5"/>
        <path d="M760.500 781L853 873.300H760.500z" fill="#dcdcdc"/>
        <path d="M760.500 827.700L806.700 873.300H760.500z" fill="#b9b9b9"/>
        <!-- folded layers, dining room -->
        <path d="M1288 647.600L1062 873.300H1288z" fill="#ffccd5"/>
        <path d="M1288 722.700L1137.500 873.300H1288z" fill="#dcdcdc"/>
        <path d="M1288 798L1212.500 873.300H1288z" fill="#b9b9b9"/>
        <g fill="none" stroke="#111" stroke-width="1.100">
          <path d="M760.500 827.700A33 33 0 0 0 806.700 827.700A33 33 0 0 0 806.700 873.300"/>
          <path d="M1212.500 798A54 54 0 0 0 1288 798M1212.500 798A54 54 0 0 1 1212.500 873.300"/>
          <path d="M760.500 781L853 873.300M760.500 827.700L806.700 873.300M1288 722.700L1137.500 873.300M1288 798L1212.500 873.300" stroke="#555" stroke-width=".9"/>
        </g>
        <clipPath id="cl"><path d="M760.500 734.500L899.300 873.300H760.500z"/></clipPath>
        <clipPath id="cr"><path d="M1288 647.600L1062 873.300H1288z"/></clipPath>
        <g fill="none" stroke="#8a680e" stroke-width="1.500">
          <path d="M760.500 781A66 66 0 0 0 853 781A66 66 0 0 0 853 873.300"/>
          <path d="M1137.500 722.700A106 106 0 0 0 1288 722.700M1137.500 722.700A106 106 0 0 1 1137.500 873.300"/>
        </g>
        <g fill="none" stroke="#111" stroke-width="1.150">
          <path d="M760.500 781A66 66 0 0 0 853 781A66 66 0 0 0 853 873.300" clip-path="url(#cl)"/>
          <path d="M1137.500 722.700A106 106 0 0 0 1288 722.700M1137.500 722.700A106 106 0 0 1 1137.500 873.300" clip-path="url(#cr)"/>
          <path d="M760.500 734.500A99 99 0 0 0 899.300 734.500A99 99 0 0 0 899.300 873.300L760.500 734.500"/>
          <path d="M1062 647.600A162 162 0 0 0 1288 647.600M1062 647.600A162 162 0 0 1 1062 873.300L1288 647.600"/>
        </g>
        <!-- walls -->
        <path d="M328.500 406.500H1302.500V887.500H328.500zM342.500 420.500V873.500H1288V420.500z" fill="#ffb733" fill-rule="evenodd" stroke="#222" stroke-width="1"/>
        <path d="M328.500 406.500l14 14M328.500 887.500l14-14M1302.500 406.500l-14 14M1302.500 887.500l-14-14" stroke="#ffd98a" stroke-width=".8"/>
        <path d="M899.500 406.500H913.500V887.500H899.500z" fill="#ffa50f" stroke="#111" stroke-width="1.200"/>
        <use href="#gl" stroke="#000" stroke-opacity=".13" stroke-dasharray="3 3" fill="none" clip-path="url(#room)"/>
        <clipPath id="room"><path d="M329 407H1302V887H329z"/></clipPath>
        <path d="M343 608H1288" stroke="#000" stroke-opacity=".14" stroke-dasharray="5 1 2 1"/>
        <!-- doorway -->
        <path d="M899.500 754.500H913.500V870.500H899.500z" fill="#b89631" stroke="#1515e8"/>
        <path d="M906.500 760V865" stroke="#1515c8"/>
        <path d="M899.500 754.500h14v6h-14zM899.500 864.500h14v6h-14z" fill="#7fc4ee" stroke="#1515e8" stroke-width="1.100"/>
        <!-- seams -->
        <path d="M347 455.500H899M916 455.500H1288M481.700 425.500V455M620.700 425.500V455M760.300 425.500V455" stroke="#1010d8" stroke-width="1.200" stroke-dasharray="11.500 6.500" fill="none"/>
        <g fill="none" stroke="#111" stroke-width="1.200">
          <path d="M397.500 438.300h29M418 433.300l9.500 5-9.500 5"/>
          <path d="M536.800 438.300h29M557.300 433.300l9.500 5-9.500 5"/>
          <path d="M676 438.300h29M696.500 433.300l9.500 5-9.500 5"/>
          <path d="M815.300 438.300h29M835.800 433.300l9.500 5-9.500 5"/>
          <path d="M610 490.500h29M630.500 485.500l9.500 5-9.500 5"/>
          <path d="M1086.500 438.300h29M1107 433.300l9.500 5-9.500 5"/>
          <path d="M1083 664.500h29M1103 659.500l9.500 5-9.500 5"/>
        </g>
        <circle cx="855.700" cy="486" r="2.600" fill="#1010d8" stroke="#0b6b35" stroke-width="1.200"/>
        <g class="pt">
          <text x="380" y="450" textLength="20">A.3</text><text x="380" y="465" textLength="63">1'0" x 4'0"</text>
          <text x="519" y="450" textLength="20">A.4</text><text x="519" y="465" textLength="63">1'0" x 4'0"</text>
          <text x="658.500" y="450" textLength="20">A.5</text><text x="658.500" y="465" textLength="63">1'0" x 4'0"</text>
          <text x="798" y="450" textLength="20">A.6</text><text x="798" y="465" textLength="63">1'0" x 4'0"</text>
          <text x="605.500" y="436" textLength="31">16'0"</text>
          <text x="585" y="502" textLength="20">A.2</text><text x="585" y="517" textLength="78">12'0" x 16'2"</text>
          <text x="365" y="540" textLength="24">2'0"</text>
          <text x="384.500" y="671" textLength="24">8'0"</text>
          <text x="345.500" y="706" textLength="31">10'0"</text>
          <text x="524.500" y="819" textLength="24">7'2"</text>
          <text x="634.500" y="845" textLength="24">2'0"</text>
          <text x="489.500" y="871" textLength="24">9'2"</text>
          <text x="528" y="584" textLength="45">Kitchen</text>
          <text x="865.500" y="653" textLength="31">13'0"</text>
          <text x="1254" y="653" textLength="31">13'0"</text>
          <text x="1054" y="676" textLength="20">B.1</text><text x="1054" y="691" textLength="86">12'0" x 10'11"</text>
          <text x="1065.500" y="450" textLength="20">A.1</text><text x="1065.500" y="465" textLength="71">1'0" x 10'9"</text>
          <text x="1085.500" y="436" textLength="31">10'9"</text>
          <text x="1038.500" y="584" textLength="76.500">Dining Room</text>
        </g>
        <path d="M983 307.500c0-1.500 1.500-2 2.500-1l21 21.500c1 1 .5 2-1 2h-9l5.500 10c1 3-4.500 5-6 2l-4.500-10-6.500 5.500c-1 1-2 .5-2-1z" fill="#f4f4f4" stroke="#111" stroke-width="1.800"/>
      </svg>
      <div class="cscroll"><svg width="9" height="6" viewBox="0 0 9 6"><path d="M1 5l3.500-4L8 5" fill="none" stroke="#888" stroke-width="1.300"/></svg><i></i><svg width="9" height="6" viewBox="0 0 9 6"><path d="M1 1l3.500 4L8 1" fill="none" stroke="#888" stroke-width="1.300"/></svg></div>
    </div>
    <div class="floortabs">
      <svg class="upa" width="7" height="4" viewBox="0 0 7 4"><path d="M0 4h7L3.500 0z"/></svg>
      <svg class="fplus" width="12" height="12"><use href="#plus"/></svg>
      <svg class="la" width="4" height="8" viewBox="0 0 4 8"><path d="M4 0v8L0 4z"/></svg>
      <b>Main Floor</b>
      <svg class="ra" width="4" height="8" viewBox="0 0 4 8"><path d="M0 0v8l4-4z"/></svg>
      <div class="fscroll"><span><svg width="6" height="9" viewBox="0 0 6 9"><path d="M5 1L1 4.500 5 8" fill="none" stroke="#888" stroke-width="1.300"/></svg></span><div><i></i></div><span><svg width="6" height="9" viewBox="0 0 6 9"><path d="M1 1l4 3.500L1 8" fill="none" stroke="#888" stroke-width="1.300"/></svg></span></div>
      <svg class="slider" width="141" height="17" viewBox="0 0 141 17"><rect x=".5" y="7.500" width="139" height="3" fill="#e7eaea" stroke="#d0d0d0"/><rect x="83.500" y=".5" width="10" height="17" fill="#f0f0f0" stroke="#aaa"/></svg>
    </div>
    <div class="status"><span>Ready</span><svg width="14" height="13" viewBox="0 0 14 13"><path d="M1 7l6-6 6 6M1 12l6-6 6 6" fill="none" stroke="#222" stroke-width="1.200"/></svg><i></i></div>
  </section>

  <aside class="right">
    <div class="phead"><span>Property View</span><svg width="7" height="8" viewBox="0 0 7 8"><path d="M.7.7h5.600v6.600H.7z" fill="none" stroke="#333" stroke-width="1.300"/></svg><svg width="8" height="8" viewBox="0 0 8 8"><path d="M1 .5L3.500 4 1 7.500M4.500.5L7 4 4.500 7.500" fill="none" stroke="#333"/></svg></div>
    <div class="props">
      <div class="many">Many</div>
      <div class="root"><svg class="tri"><path d="M5.500 0v6H0z"/></svg></div>
      <div class="grid">
        <div class="row h21 cat"><svg class="tri"><path d="M5.500 0v6H0z"/></svg><span>Tab</span><div><svg width="9" height="8" viewBox="0 0 9 8"><path d="M0 0h9L4.500 8z" fill="#777"/></svg></div></div>
        <div class="row h20"><span>Id</span><div class="idbox">{Qy3BRMGd}<b><svg width="16" height="16" viewBox="0 0 16 16"><path d="M1 1h6v10H1zM7 4h5l3 3v8H7z" fill="#fff" stroke="#777"/><path d="M2 4h4M2 7h4M8 9h6M8 12h6" stroke="#3d78b8"/></svg></b></div></div>
        <div class="row h23"><span>Name</span><div class="cb white">Main Floor<svg width="8" height="6"><use href="#chev"/></svg></div></div>
        <div class="row h23"><span>Width</span><div class="val">650'0"</div></div>
        <div class="row h23"><span>Height</span><div class="val">650'0"</div></div>
        <div class="row h23 wb"><span>Duplication</span><div class="val">1</div></div>
        <div class="row h21 cat"><svg class="tri"><path d="M5.500 0v6H0z"/></svg><span>Project</span><div><svg width="9" height="8" viewBox="0 0 9 8"><path d="M0 0h9L4.500 8z" fill="#777"/></svg></div></div>
        <div class="row h22"><span>Measurement System</span><div class="cb">Imperial<svg width="8" height="6"><use href="#chev"/></svg></div></div>
        <div class="row h23"><span>Length Unit</span><div class="cb">FeetInch<svg width="8" height="6"><use href="#chev"/></svg></div></div>
        <div class="row h23"><span>Length Precision</span><div class="cb">Inch<svg width="8" height="6"><use href="#chev"/></svg></div></div>
        <div class="row h23"><span>Area Unit</span><div class="cb">SquareFeet<svg width="8" height="6"><use href="#chev"/></svg></div></div>
        <div class="row h22"><span>Area Precision</span><div class="cb"><u>SquareFeet Percentage</u><svg width="8" height="6"><use href="#chev"/></svg></div></div>
        <div class="row h23"><span>Volume Unit</span><div class="cb">US Gal<svg width="8" height="6"><use href="#chev"/></svg></div></div>
        <div class="row h23"><span>Volume Precision</span><div class="cb"><u>US Gal Percentage</u><svg width="8" height="6"><use href="#chev"/></svg></div></div>
        <div class="row h21"><span>Add-on by Boxed U...</span><div class="chk"><i></i></div></div>
        <div class="row h21"><span>Cap Roll Addon Wa...</span><div class="chk"><i></i><em>20%</em></div></div>
      </div>
      <div class="blank"></div>
      <div class="desc"></div>
    </div>
    <div class="dots"><i></i><i></i><i></i><i></i><i></i></div>
    <div class="acc">
      <div class="ac on"><svg width="22" height="22" viewBox="0 0 22 22"><path d="M.7.7h20.600v20.600H.7z" fill="#fff" stroke="#777" stroke-width="1.300"/><path d="M0 0h22v4H0zM2 8h9v9H2z" fill="#8c55a5"/><path d="M13 8.500h7M13 11h7M13 13.500h7M13 16h7" stroke="#777"/></svg>Property View</div>
      <div class="ac"><svg width="22" height="22" viewBox="0 0 22 22"><path d="M.7.7h20.600v20.600H.7z" fill="#fff" stroke="#777" stroke-width="1.300"/><path d="M0 0h22v4H0z" fill="#4f9f7c"/><path d="M6 7.500v10l10-5z" fill="none" stroke="#3d78b8" stroke-width="1.600"/></svg>Estimation View</div>
      <div class="ac"><svg width="22" height="22" viewBox="0 0 22 22"><path d="M.7.7h20.600v20.600H.7z" fill="#fff" stroke="#777" stroke-width="1.300"/><path d="M0 0h22v4H0z" fill="#3d78b8"/><path d="M6.500 7.500h9v10h-9z" fill="none" stroke="#3d78b8" stroke-width="1.400"/><path d="M9 10.500h3" stroke="#999" stroke-width="2"/></svg>Room View</div>
      <div class="ac rest"></div>
    </div>
  </aside>
</main>

<footer class="taskbar">
  <div class="weather"><svg width="24" height="30" viewBox="0 0 24 30"><circle cx="10.500" cy="17.500" r="10" fill="url(#gSun)"/><circle cx="16.500" cy="8" r="7.800" fill="#f2a9a9"/><text x="17" y="12" text-anchor="middle" class="wn">1</text></svg><div><b>87°F</b><span>Sunny</span></div></div>
  <div class="tasks">
    <svg class="win" width="23" height="23" viewBox="0 0 23 23"><path d="M0 0h11v11H0zM12 0h11v11H12zM0 12h11v11H0zM12 12h11v11H12z" fill="url(#gWin)"/></svg>
    <div class="search"><svg width="15" height="15" viewBox="0 0 15 15"><circle cx="6.500" cy="6.500" r="5.500" fill="none" stroke="#eee" stroke-width="1.500"/><path d="M10.500 10.500l4 4" stroke="#eee" stroke-width="1.700"/></svg><span>Search</span><svg width="20" height="20" viewBox="0 0 20 20"><path d="M10 0a10 10 0 1 1-9 6L10 0z" fill="#1b87e0"/><circle cx="10" cy="10" r="9.500" fill="#2190e4"/><path d="M7 4v10l3 2 4-2.500c2-2-1-4-4-4.500" fill="none" stroke="#fff" stroke-width="2"/></svg></div>
    <div class="task"><svg width="24" height="24" viewBox="0 0 24 24"><rect x="7" y="1" width="17" height="16" fill="#f4f4f4"/><rect x="0" y="7" width="17" height="15" fill="#777" fill-opacity=".85"/></svg></div>
    <div class="task"><svg width="24" height="24" viewBox="0 0 24 24"><path d="M12 1a11 11 0 1 1-6 20l-5 1 1-5A11 11 0 0 1 12 1z" fill="#6264b8"/><rect x="5" y="8" width="9" height="8" rx="1.500" fill="#fff"/><path d="M15 11l4-3v8l-4-3z" fill="#fff"/></svg></div>
    <div class="task"><svg width="24" height="24" viewBox="0 0 24 24"><path d="M0 4q0-2 2-2h6l2 3H2z" fill="#d99a10"/><rect y="4" width="24" height="18" rx="1" fill="#fcc94a"/><path d="M5 22v-5q0-2 2-2h10q2 0 2 2v5z" fill="#1c7fd0"/></svg></div>
    <div class="task"><svg width="24" height="24" viewBox="0 0 24 24"><path d="M12 2l10 2v11l-8 7z" fill="#8a8f93"/><ellipse cx="10" cy="12" rx="9" ry="10.500" fill="#b4b8bb"/><ellipse cx="10" cy="12" rx="6.500" ry="8" fill="#a2a6a9"/><ellipse cx="9" cy="13" rx="3" ry="4" fill="#dcdfe1"/></svg></div>
    <div class="task run"><svg width="24" height="24" viewBox="0 0 24 24"><rect width="24" height="24" rx="8" fill="#05b98a"/><path d="M5.500 18l4-13h5l4 13h-4l-.6-2.500h-3.800L9.500 18zM11 12.500h2L12 9z" fill="#fff" fill-rule="evenodd"/></svg></div>
    <div class="task run"><svg width="24" height="24" viewBox="0 0 24 24"><rect width="24" height="24" rx="2" fill="#4ba3e2"/><path d="M12 2l9 5v10l-9 5-9-5V7z" fill="none" stroke="#9fd0f3"/><text x="3" y="17" class="tm">m</text><text x="18.500" y="9" class="t2x">2</text></svg></div>
    <div class="task run"><svg width="30" height="30" viewBox="0 0 30 30"><g transform="translate(1 4)"><use href="#chrome" width="24" height="24"/></g><circle cx="22" cy="8" r="7.500" fill="#5567b8"/><text x="22" y="11.500" text-anchor="middle" class="ba">A</text></svg></div>
    <div class="task run"><svg width="24" height="24" viewBox="0 0 24 24"><rect width="24" height="24" rx="7" fill="#ef3a3e"/><circle cx="12" cy="12" r="9" fill="#fff"/><path d="M8 8.500l4 7 4-7" fill="none" stroke="#ef3a3e" stroke-width="3.500" stroke-linecap="round" stroke-linejoin="round"/></svg></div>
    <div class="task run"><svg width="30" height="30" viewBox="0 0 30 30"><g transform="translate(1 4)"><use href="#chrome" width="24" height="24"/></g><circle cx="22" cy="8" r="7.500" fill="#bf3a15"/><text x="22" y="11.500" text-anchor="middle" class="ba">A</text></svg></div>
    <div class="task run"><svg width="24" height="24" viewBox="0 0 24 24"><rect width="24" height="24" rx="2" fill="#52a31c"/><path d="M20 5.500H9.500L6.500 9v6l3 3.500H20" fill="none" stroke="#fff" stroke-width="3.200"/></svg></div>
    <div class="task run cur"><svg width="24" height="24" viewBox="0 0 24 24"><rect width="24" height="24" rx="2" fill="#f4553c"/><path d="M20 5.500H9.500L6.500 9v6l3 3.500H20" fill="none" stroke="#fff" stroke-width="3.200"/></svg></div>
  </div>
  <div class="clock"><span>4:10 PM</span><span>8/7/2023</span></div>
</footer>
</body>
</html>
```
FILE: styles.css
```css
*{box-sizing:border-box}
body{margin:0;width:1920px;height:1080px;overflow:hidden;display:flex;flex-direction:column;font-family:"Open Sans","Noto Sans",sans-serif;font-size:11.5px;letter-spacing:-.18px;color:#111;background:#fff;white-space:nowrap}
svg{display:block;flex:none}
.defs{position:absolute}
i,em,u{font-style:normal;text-decoration:none}
.blue{color:#3d78b8}.lt{color:#c2c2c2}.vlt{color:#d6d6d6}.orange{color:#ee7a3a}
.flip{transform:scaleX(-1)}

.titlebar{height:23px;background:#d2d2d2;display:flex;align-items:center;flex:none}
.logo{margin-left:3px}
.logo-m{font:bold 12px "Open Sans",sans-serif;fill:#fff;letter-spacing:0}
.logo-2{font:bold 6px "Open Sans",sans-serif;fill:#fff;letter-spacing:0}
.tsep{width:1px;height:21px;background:#888;margin-left:7px}
.quick{display:flex;align-items:center;width:224px;padding-left:12px;gap:6.300px}
.quick .help{margin-left:1px}
.quick .qarr{margin:0 0 0 -2px}
.quick svg:last-child{margin-left:-2px}
.quick+.tsep{margin-left:0}
.qm{font:12px "Open Sans",sans-serif;fill:#3d78b8}
.title{margin-left:6px;font-size:12px;letter-spacing:-.38px}
.winbtns{margin-left:auto;display:flex;gap:38px;padding:7px 20px 0 0;align-items:center}

.tabs{height:24px;background:#f5f5f5;border-bottom:1px solid #d4d4d4;display:flex;flex:none;padding-top:1px;font-size:12px;letter-spacing:-.38px}
.file{width:56px;height:22px;background:linear-gradient(#62aee4,#4a9ad8 50%,#3f92d4 51%,#6db6e8);border:1px solid #3a86c4;color:#fff;display:flex;align-items:center;padding-left:8px;gap:9px;fill:#fff}
.tab{display:flex;align-items:center;justify-content:center;height:23px;padding-top:3px}
.t1{width:90px}.t2{width:60px}.t3{width:86px}.t4{width:51px}
.tab.active{height:24px;background:#fff;border:1px solid #d4d4d4;border-bottom:0;margin-bottom:-1px}

.ribbon{height:91px;flex:none;display:flex;background:linear-gradient(#fefefe,#f9f9f9);border-bottom:2px solid #d8d8d8;font-size:12px;letter-spacing:-.4px}
.group{display:flex;flex-direction:column;background:linear-gradient(#d6d6d6,#d6d6d6) no-repeat right 8px/1px 75px}
.group{background-position:right 8px}
.tools{height:73px;display:grid;align-content:start}
.gname{text-align:center;color:#999;line-height:14px}
.g-import{width:142px}.g-import .tools{padding-left:6px;grid-template-columns:45px 44px 44px}
.g-room{width:180px}.g-room .tools{padding-left:2px;grid-template-columns:44px 49px 1fr}
.g-shape{width:222px}.g-shape .tools{padding-left:3px;grid-template-columns:49px 85px 1fr}
.g-markup{width:159px}.g-markup .tools{padding-left:2px;grid-template-columns:43px 50px 1fr}
.g-estimate{width:194px}.g-estimate .tools{padding-left:7px;grid-template-columns:53px 128px}
.g-layout{width:208px}.g-layout .tools{padding-left:7px;grid-template-columns:52px 52px 1fr}
.g-zoom{width:105px}.g-zoom .tools{padding-left:2px;grid-template-columns:46px 1fr}
.g-view{width:132px}.g-view .tools{padding-left:2px;grid-template-columns:47px 1fr}
.g-edit{width:243px}.g-edit .tools{padding-left:2px;grid-template-columns:44px 44px 45px 47px 1fr}
.g-sedit{width:186px}.g-sedit .tools{padding-left:1px;grid-template-columns:48px 63px 1fr}
.big{width:44px;padding-top:7px;display:flex;flex-direction:column;align-items:center}
.big span{line-height:14px;margin-top:3px}
.big .arr{margin-top:2px}
.big .second{display:flex;align-items:center;gap:3px;margin-top:0;line-height:12px}
.off{color:#a5a5a5}
.col{padding-top:3.500px}
.small{height:22px;display:flex;align-items:center}
.small>svg:first-child{margin-right:2px}
.small.sp>svg:first-child{margin-right:3px}
.sarr{margin-left:10px}
.sarr.mid{margin-left:9px}
.sarr.near{margin-left:4px}
.estbox{padding-top:5px}
.selprod{height:24px;border:1px solid #999;background:linear-gradient(#f0f0f0,#e3e3e3);display:flex;align-items:center;justify-content:space-between;padding:0 5px 0 1px}
.selprod em{font-style:italic}
.playbar{margin-top:2px;height:30px;border:1px solid #d0d0d0;border-radius:2px;display:flex;align-items:center;justify-content:space-between;padding:0 4px 0 3px}
.zcombo{width:55px;height:22px;margin-left:-2px;border:1px solid #999;background:#fff;display:flex;align-items:center;justify-content:space-between;padding:0 4px}

.work{height:893px;flex:none;display:flex;background:#c9cad2}
.left{width:246px;border-left:1px solid #c3c7cf;display:flex;flex-direction:column;background:#fff;border-right:1px solid #a5a9b5}
.phead{height:25px;flex:none;background:linear-gradient(#fff,#f6f6f6);display:flex;align-items:center;padding:1px 6px 0 4px;border-bottom:1px solid #b5b9c2;font-size:12px;letter-spacing:-.36px;gap:13px}
.left .phead{padding-right:5px}
.phead span{margin-right:auto}
.lcombo{height:24px;display:flex;align-items:center;flex:none}
.combo{height:24px;border:1px solid #a8a8a8;background:linear-gradient(#f0f0f0,#e5e5e5);display:flex;align-items:center;justify-content:space-between;padding:0 5px}
.combo.wide{width:221px;padding-left:6px}
.dbs{margin-left:3px}
.ptool{height:22px;flex:none;display:flex;align-items:center;padding-left:4px;letter-spacing:0}
.ptool svg+svg{margin-left:8px}
.ptool span{width:9px;text-align:center;margin-left:6px;line-height:14px}
.ptool span:nth-of-type(1){margin-left:7px}
.ptool span+span{margin-left:8px}
.box{height:20px;border:1px solid #a8a8a8;background:#fff;margin-left:4px}
.b1{width:123px}.b2{width:87px}
.ptool .clr{margin-left:5px}
.ptool .gr{margin-left:auto;margin-right:2px}
.ptool .warn{margin-left:6px}.ptool .wa{margin-left:6px}
.treewrap{height:301px;flex:none;border-top:1px solid #8a93a5;display:flex;padding:1px;border-bottom:3px solid #d2d4da}
.tree{flex:1}
.tr,.pr{height:18px;display:flex;align-items:center}
.tr{letter-spacing:-.13px}
.wide-t{letter-spacing:.05px}
.pb{width:9px;height:9px}.fo{width:16px;height:16px;margin-left:3px}
.fo+span{margin-left:5px}
.l1{padding-left:7px}.l2{padding-left:23px}.l3{padding-left:35px}
.sw{width:16px;height:16px;border:1px solid #000;flex:none}
.pb+.sw{margin-left:3px}
.nb{border:0}
.gray{background:#858585}.red{background:#f00}.green{background:#12801a}.bl{background:#0a0ae6}.cyan{background:#0ff}
.pink{background:#fbbfc9}.lgray{background:#d2d2d2}.brown{background:#a87a12}.mgray{background:#a5a5a5}.marble{background:#1f8e28}.yellow{background:#ffff2e}.magenta{background:#f0f}.aqua{background:#aeeeee}
.tr .sw+span{padding-left:1px;flex:1;margin-right:2px;height:16px;line-height:15px}
.tr.on span{background:#0478d7;color:#fff}
.vscroll{width:17px;background:#f0f0f0;display:flex;flex-direction:column;align-items:center;padding:6px 0 5px}
.vscroll i{width:17px;height:235px;background:#cdcdcd;margin:34px 0 auto}
.table{height:325px;flex:none;border:1px solid #7c8798;border-left:1px solid #a0a6b0;border-right:0;display:flex;flex-direction:column;overflow:hidden}
.thead{height:21px;flex:none;display:flex;align-items:center;background:linear-gradient(#fff,#f5f5f5);border-bottom:1px solid #ddd}
.thead span{line-height:18px;padding-top:2px}
.thead span:nth-child(1){width:124px;padding-left:4px;text-align:center;border-right:1px solid #ddd}
.thead span:nth-child(2){width:75px;text-align:center;border-right:1px solid #ddd}
.thead span:nth-child(3){padding-left:10px}
.table .l1{padding-left:7px}.table .l2{padding-left:23px}.table .l3{padding-left:35px}
.pr{height:21px;flex:none}
.nm{width:66px;overflow:hidden;padding-left:1px}
.fo+.nm{width:auto}
.pat{margin-left:3px}
.u1{width:75px;margin-left:11px}
.u2{width:39px;overflow:hidden;margin-right:-20px}
.pr.on{background:linear-gradient(#3d97e0 48%,#0478d7 52%);color:#fff}
.pr.dim{color:#777}
.pr.tall{height:37px}
.tilesw{margin-left:3px}
.tilesw+.nm{width:50px}
.hscroll{height:17px;flex:none;margin-top:auto;background:#f0f0f0;display:flex;align-items:center;padding:0 7px}
.hscroll i{width:70px;height:17px;background:#cdcdcd;margin:0 auto 0 5px}
.dots{height:6px;flex:none;background:#f5f5f5;display:flex;justify-content:center;align-items:center;gap:2px}
.dots i{width:2px;height:2px;background:#777}
.acc{flex:1;display:flex;flex-direction:column}
.ac{height:28px;border-top:1px solid #bfc2cc;background:linear-gradient(90deg,#f2f2f2,#f7f7f7);display:flex;align-items:center;padding-left:5px;gap:9px;font-weight:bold;letter-spacing:-.4px;color:#111;font-size:12px}
.ac svg[width="24"]{margin-right:-2px}
.ac.on{background:#ebfdfd}
.ac.rest{flex:1}

.center{width:1410px;margin-left:4px;display:flex;flex-direction:column;background:#fff}
.drawing{display:flex;height:857px}
.cscroll{width:16px;background:#f0f0f0;display:flex;flex-direction:column;align-items:center;padding:6px 1px 5px 0}
.cscroll i{width:16px;height:31px;background:#cdcdcd;margin:399px -1px auto 0}
.floortabs{height:17px;display:flex;align-items:center;padding-left:5px;color:#3d78b8}
.fplus{margin-left:7px}.la{margin-left:9px}
.floortabs b{margin-left:13px;color:#00008b;border-right:1px solid #999;width:69px;line-height:17px;padding-left:1px;font-size:12px;letter-spacing:-.5px;padding-top:1px;height:17px;margin-right:974px}
.fscroll{margin-left:3px;width:153px;height:17px;display:flex;border:solid #d0d0d0;border-width:0 3px}
.fscroll span{width:17px;background:#f0f0f0;display:flex;align-items:center;justify-content:center}
.fscroll div{flex:1;background:#fff}
.fscroll div i{display:block;width:8px;height:17px;margin-left:50px;background:#c6c6c6}
.slider{margin-left:5px}
.status{height:19px;background:#f4f4f4;display:flex;align-items:center;padding:2px 3px 0 1px;font-size:12px;letter-spacing:-.3px}
.status span{margin-right:auto}
.status i{width:12px;height:12px;border:1.500px solid #111;margin-left:3px}

.right{width:256px;margin-left:4px;display:flex;flex-direction:column;background:#fff;border-right:1px solid #b5b9c2}
.props{height:750px;flex:none;border:1px solid #8a93a5;display:flex;flex-direction:column}
.many{height:22px;background:#dcdcdc;font-weight:bold;font-size:12.500px;letter-spacing:-.35px;padding-left:7px;line-height:22px;color:#111}
.root{height:18px;background:#f0f0f0;padding:5px 0 0 6px}
.tri{width:6px;height:6px}
.grid{border-left:10px solid #f0f0f0;font-size:12px;letter-spacing:-.36px}
.row{display:flex;border-bottom:1px solid #eee;align-items:stretch}
.h20{height:20px}.h21{height:21px}.h22{height:22px}.h23{height:23px}
.row>span{width:150px;padding-left:32px;border-right:1px solid #eee;display:flex;align-items:center}
.row.cat{border-bottom:0;align-items:center}
.row.cat>span{width:139px;padding-left:6px;height:100%}
.row.cat .tri{margin-left:5px}
.row.cat>div{padding-left:6px}
.row.wb{border-bottom:2px solid #eee;height:24px}
.val{padding-left:5px;display:flex;align-items:center}
.cb,.idbox{width:93px;border:1px solid #a9a9a9;display:flex;align-items:center;justify-content:space-between;padding:0 5px 0 5px}
.cb{background:linear-gradient(#f0f0f0,#e6e6e6)}
.cb.white{background:#fff}
.cb u{width:66px;overflow:hidden}
.idbox{padding:0 0 0 2px;letter-spacing:-.55px}
.idbox b{width:20px;height:20px;border:1px solid #666;background:#e0e0e0;display:flex;align-items:center;justify-content:center}
.chk{display:flex;align-items:center;padding-left:6px;gap:3px}
.chk i{width:14px;height:13px;border:1px solid #444;background:#fff}
.chk em{width:69px;height:18px;line-height:16px;border:1px solid #ccc;color:#999;padding-left:3px}
.blank{flex:1;border-bottom:1px solid #ddd}
.desc{height:45px;background:#dcdcdc;border-top:3px solid #f0f0f0}

.taskbar{height:49px;flex:1;border-top:1px solid #444;background:#1c1c1c;display:flex;align-items:center;color:#fff;letter-spacing:-.2px}
.weather{width:595px;padding-left:21px;display:flex;align-items:center;gap:5px}
.weather div{display:flex;flex-direction:column;line-height:16px}
.weather b{font-weight:normal}
.weather span{color:#c4c4c4}
.wn{font:11px "Open Sans",sans-serif;fill:#222}
.tasks{display:flex;align-items:center}
.search{width:220px;height:33px;margin:0 2px 0 13px;border-radius:17px;background:#3a3a3a;border:1px solid #474747;display:flex;align-items:center;padding:0 5px 0 11px;gap:10px}
.search span{margin-right:auto;color:#ccc;font-size:12.500px;letter-spacing:0}
.task{width:40px;height:41px;margin:0 2px;display:flex;flex-direction:column;align-items:center;justify-content:center;position:relative}
.run::after{content:"";position:absolute;bottom:1px;left:17px;width:6px;height:3px;border-radius:2px;background:#999}
.cur{border:1px solid #333;border-radius:4px;background:#222}
.cur::after{background:#e8a0b0;left:16px;bottom:0}
.tm{font:bold 16px "Open Sans",sans-serif;fill:#fff}
.t2x{font:bold 8px "Open Sans",sans-serif;fill:#fff}
.ba{font:10px "Open Sans",sans-serif;fill:#fff}
.clock{margin-left:auto;padding-right:23px;display:flex;flex-direction:column;align-items:flex-end;line-height:16px;color:#ccc}

.pt text{font:12px "DejaVu Sans",sans-serif;letter-spacing:0;fill:#0a0a0a}
```
